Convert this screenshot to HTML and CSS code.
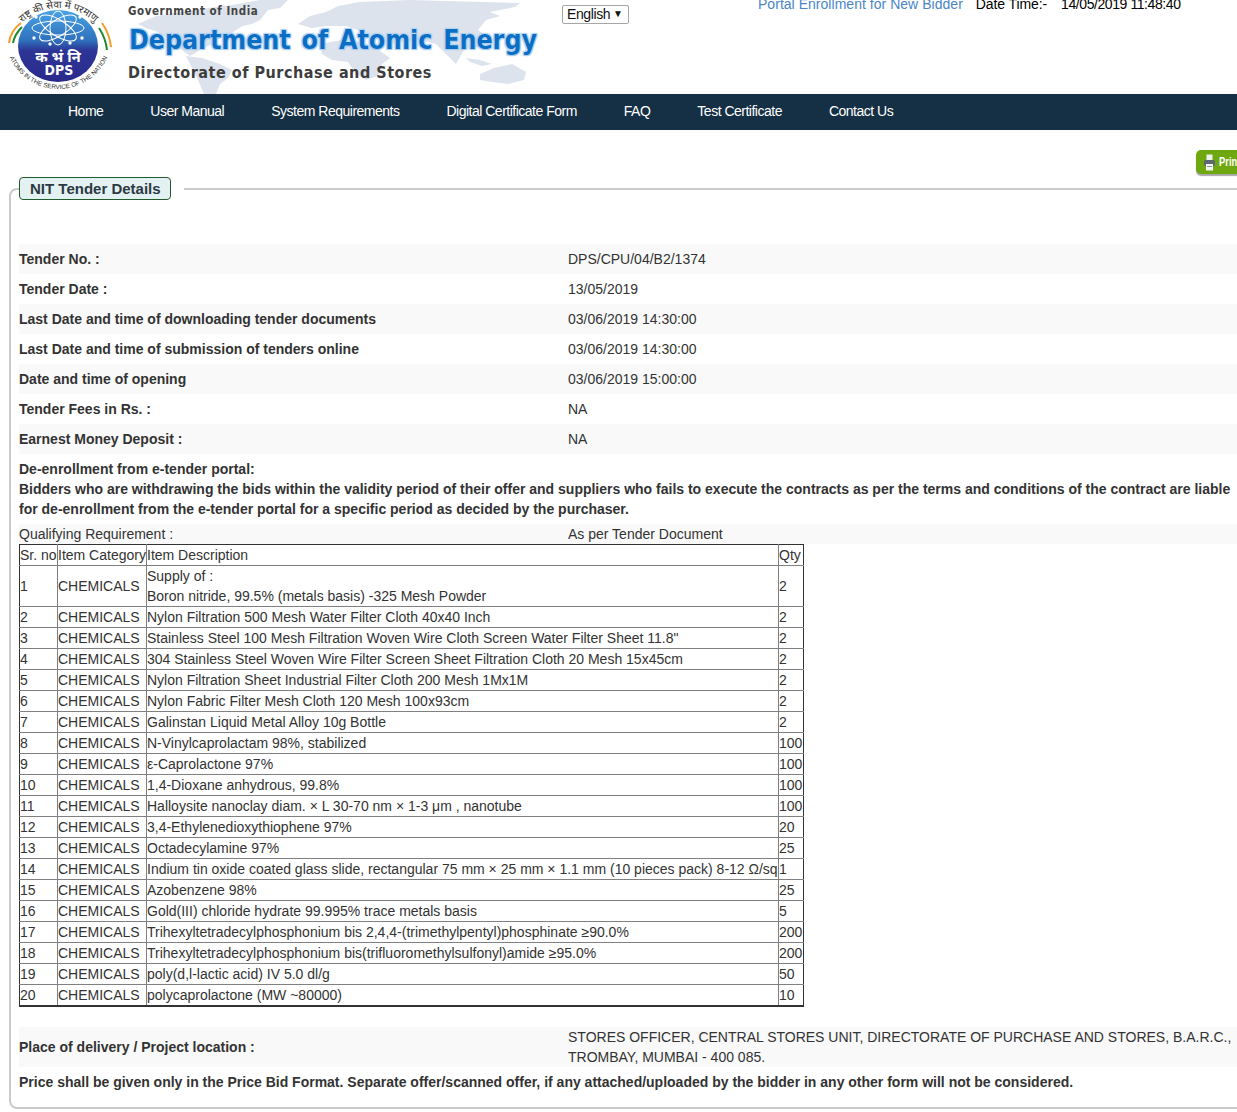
FILE: index.html
```html
<!DOCTYPE html>
<html lang="en">
<head>
<meta charset="utf-8">
<title>NIT Tender Details</title>
<link rel="stylesheet" href="styles.css">
</head>
<body>
<header class="masthead">
  <svg class="worldmap" viewBox="0 0 440 94" width="440" height="94" aria-hidden="true">
    <g fill="#dde3ec">
      <path d="M18 24 36 16 62 12 88 8 112 5 140 0H168L160 8 148 10 140 20 132 24 122 26 112 33 100 38 92 44 80 50 70 56 62 50 50 40 38 32 26 28Z"/>
      <path d="M66 56 82 58 100 64 112 70 108 78 100 84 96 94H84L78 80 72 68Z"/>
      <path d="M178 24 190 16 206 12 218 6 240 2 290 0 400 3 395 7 370 12 380 16 366 20 358 30 372 40 362 46 344 50 336 64 326 54 316 44 300 40 284 42 270 44 252 36 238 30 226 26 206 26 192 28Z"/>
      <path d="M200 44 222 40 242 42 256 48 270 58 262 64 258 76 246 80 236 74 228 62 212 60 202 54Z"/>
      <path d="M360 74 374 68 392 64 406 72 404 80 388 84 372 82 360 80Z"/>
      <path d="M346 58 360 60 372 64 362 66 350 62Z"/>
    </g>
  </svg>
  <div class="brand">
    <svg class="logo" viewBox="0 0 120 94" width="120" height="94" aria-hidden="true">
      <defs>
        <linearGradient id="disc" x1="0" y1="0" x2="0" y2="1">
          <stop offset="0" stop-color="#4aa3e6"/>
          <stop offset=".42" stop-color="#2f72bd"/>
          <stop offset=".56" stop-color="#2d3596"/>
          <stop offset="1" stop-color="#2a2a8c"/>
        </linearGradient>
        <path id="arcTop" d="M20 25A52 52 0 0 1 97 25"/>
        <path id="arcBottom" d="M7 50A53.5 53.5 0 0 0 110 50"/>
      </defs>
      <path d="M9 43C10 35 14 28 21 23" fill="none" stroke="#f59a23" stroke-width="2"/>
      <path d="M13 43C14 37 17 32 22 27" fill="none" stroke="#1d8a2f" stroke-width="2"/>
      <path d="M102 23C107 30 110 38 111 47" fill="none" stroke="#f59a23" stroke-width="2"/>
      <path d="M99 28C103 34 106 41 107 50" fill="none" stroke="#1d8a2f" stroke-width="2"/>
      <ellipse cx="58" cy="46" rx="40" ry="36" fill="url(#disc)"/>
      <g fill="none" stroke="#fff" stroke-width="1">
        <ellipse cx="58" cy="28" rx="8" ry="17"/>
        <ellipse cx="58" cy="28" rx="8" ry="21" transform="rotate(58 58 28)"/>
        <ellipse cx="58" cy="28" rx="8" ry="21" transform="rotate(-58 58 28)"/>
        <ellipse cx="58" cy="28" rx="26" ry="7"/>
      </g>
      <g fill="#fff">
        <circle cx="34" cy="38" r="1.7"/><circle cx="82" cy="38" r="1.7"/><circle cx="50" cy="44" r="1.7"/>
        <circle cx="70" cy="43" r="1.7"/><circle cx="36" cy="17" r="1.7"/><circle cx="80" cy="17" r="1.7"/>
      </g>
      <text class="logo-hindi" x="58" y="62" text-anchor="middle">क भं नि</text>
      <text class="logo-dps" x="59" y="75" text-anchor="middle">DPS</text>
      <text class="logo-arc-top"><textPath href="#arcTop" startOffset="50%" text-anchor="middle">राष्ट्र की सेवा में परमाणु</textPath></text>
      <text class="logo-arc-bottom"><textPath href="#arcBottom" startOffset="50%" text-anchor="middle">ATOMS IN THE SERVICE OF THE NATION</textPath></text>
    </svg>
    <div class="titles">
      <div class="gov">Government of India</div>
      <div class="dept">Department of Atomic Energy</div>
      <div class="dir">Directorate of Purchase and Stores</div>
    </div>
  </div>
  <div class="lang"><span class="lang-name">English</span><span class="caret">▼</span></div>
  <div class="status">
    <a class="enroll" href="#">Portal Enrollment for New Bidder</a>
    <span class="clock-label">Date Time:-</span>
    <span class="clock">14/05/2019 11:48:40</span>
  </div>
</header>

<nav class="mainnav">
  <a href="#">Home</a>
  <a href="#">User Manual</a>
  <a href="#">System Requirements</a>
  <a href="#">Digital Certificate Form</a>
  <a href="#">FAQ</a>
  <a href="#">Test Certificate</a>
  <a href="#">Contact Us</a>
</nav>

<main class="page">
  <div class="toolbar">
    <a class="print" href="#">
      <svg viewBox="0 0 11 17" width="11" height="17" aria-hidden="true">
        <rect x="2.5" y="0.5" width="6" height="5.5" fill="#eef1f2"/>
        <rect x="0" y="6" width="11" height="6" rx="1.5" fill="#5d676e"/>
        <rect x="2" y="10" width="7" height="6.5" fill="#f2f4f5"/>
        <rect x="3" y="12" width="5" height="1" fill="#8a949b"/>
      </svg>
      <span class="print-label">Print</span>
    </a>
  </div>

  <fieldset class="panel">
    <legend><span class="badge">NIT Tender Details</span></legend>
    <div class="details">
      <div class="row"><b>Tender No. :</b><span>DPS/CPU/04/B2/1374</span></div>
      <div class="row"><b>Tender Date :</b><span>13/05/2019</span></div>
      <div class="row"><b>Last Date and time of downloading tender documents</b><span>03/06/2019 14:30:00</span></div>
      <div class="row"><b>Last Date and time of submission of tenders online</b><span>03/06/2019 14:30:00</span></div>
      <div class="row"><b>Date and time of opening</b><span>03/06/2019 15:00:00</span></div>
      <div class="row"><b>Tender Fees in Rs. :</b><span>NA</span></div>
      <div class="row"><b>Earnest Money Deposit :</b><span>NA</span></div>
    </div>
    <p class="notice">De-enrollment from e-tender portal:<br>Bidders who are withdrawing the bids within the validity period of their offer and suppliers who fails to execute the contracts as per the terms and conditions of the contract are liable<br>for de-enrollment from the e-tender portal for a specific period as decided by the purchaser.</p>
    <div class="qualify"><span>Qualifying Requirement :</span><span>As per Tender Document</span></div>
    <table class="items">
      <thead>
        <tr><th>Sr. no</th><th>Item Category</th><th>Item Description</th><th>Qty</th></tr>
      </thead>
      <tbody>
        <tr><td>1</td><td>CHEMICALS</td><td>Supply of :<br>Boron nitride, 99.5% (metals basis) -325 Mesh Powder</td><td>2</td></tr>
        <tr><td>2</td><td>CHEMICALS</td><td>Nylon Filtration 500 Mesh Water Filter Cloth 40x40 Inch</td><td>2</td></tr>
        <tr><td>3</td><td>CHEMICALS</td><td>Stainless Steel 100 Mesh Filtration Woven Wire Cloth Screen Water Filter Sheet 11.8"</td><td>2</td></tr>
        <tr><td>4</td><td>CHEMICALS</td><td>304 Stainless Steel Woven Wire Filter Screen Sheet Filtration Cloth 20 Mesh 15x45cm</td><td>2</td></tr>
        <tr><td>5</td><td>CHEMICALS</td><td>Nylon Filtration Sheet Industrial Filter Cloth 200 Mesh 1Mx1M</td><td>2</td></tr>
        <tr><td>6</td><td>CHEMICALS</td><td>Nylon Fabric Filter Mesh Cloth 120 Mesh 100x93cm</td><td>2</td></tr>
        <tr><td>7</td><td>CHEMICALS</td><td>Galinstan Liquid Metal Alloy 10g Bottle</td><td>2</td></tr>
        <tr><td>8</td><td>CHEMICALS</td><td>N-Vinylcaprolactam 98%, stabilized</td><td>100</td></tr>
        <tr><td>9</td><td>CHEMICALS</td><td>ε-Caprolactone 97%</td><td>100</td></tr>
        <tr><td>10</td><td>CHEMICALS</td><td>1,4-Dioxane anhydrous, 99.8%</td><td>100</td></tr>
        <tr><td>11</td><td>CHEMICALS</td><td>Halloysite nanoclay diam. × L 30-70 nm × 1-3 μm , nanotube</td><td>100</td></tr>
        <tr><td>12</td><td>CHEMICALS</td><td>3,4-Ethylenedioxythiophene 97%</td><td>20</td></tr>
        <tr><td>13</td><td>CHEMICALS</td><td>Octadecylamine 97%</td><td>25</td></tr>
        <tr><td>14</td><td>CHEMICALS</td><td>Indium tin oxide coated glass slide, rectangular 75 mm × 25 mm × 1.1 mm (10 pieces pack) 8-12 Ω/sq</td><td>1</td></tr>
        <tr><td>15</td><td>CHEMICALS</td><td>Azobenzene 98%</td><td>25</td></tr>
        <tr><td>16</td><td>CHEMICALS</td><td>Gold(III) chloride hydrate 99.995% trace metals basis</td><td>5</td></tr>
        <tr><td>17</td><td>CHEMICALS</td><td>Trihexyltetradecylphosphonium bis 2,4,4-(trimethylpentyl)phosphinate ≥90.0%</td><td>200</td></tr>
        <tr><td>18</td><td>CHEMICALS</td><td>Trihexyltetradecylphosphonium bis(trifluoromethylsulfonyl)amide ≥95.0%</td><td>200</td></tr>
        <tr><td>19</td><td>CHEMICALS</td><td>poly(d,l-lactic acid) IV 5.0 dl/g</td><td>50</td></tr>
        <tr><td>20</td><td>CHEMICALS</td><td>polycaprolactone (MW ~80000)</td><td>10</td></tr>
      </tbody>
    </table>
    <div class="delivery"><b>Place of delivery / Project location :</b><span>STORES OFFICER, CENTRAL STORES UNIT, DIRECTORATE OF PURCHASE AND STORES, B.A.R.C.,<br>TROMBAY, MUMBAI - 400 085.</span></div>
    <p class="pricing">Price shall be given only in the Price Bid Format. Separate offer/scanned offer, if any attached/uploaded by the bidder in any other form will not be considered.</p>
  </fieldset>
</main>
</body>
</html>
```
FILE: styles.css
```css
* { box-sizing: border-box; }
html, body { margin: 0; padding: 0; overflow-x: hidden; }
body {
  width: 1237px;
  height: 1112px;
  overflow: hidden;
  background: #fff;
  color: #333;
  font: 14px/20px "Liberation Sans", Arial, sans-serif;
}
a { text-decoration: none; color: inherit; }

.masthead {
  position: relative;
  display: flex;
  height: 94px;
  overflow: hidden;
}
.worldmap { position: absolute; left: 120px; top: 0; }
.brand { position: relative; display: flex; width: 562px; }
.logo { flex: none; width: 120px; }
.logo-hindi { font: 700 15px "Noto Sans", "DejaVu Sans", sans-serif; fill: #fff; }
.logo-dps { font: 700 14px "DejaVu Sans", sans-serif; font-stretch: condensed; fill: #fff; }
.logo-arc-top { font: 10px "Noto Sans", "DejaVu Sans", sans-serif; fill: #333; }
.logo-arc-bottom { font: 6.3px "Liberation Sans", sans-serif; fill: #333; }

.titles {
  padding: 3px 0 0 8px;
  font-family: "DejaVu Sans", sans-serif;
  font-stretch: condensed;
  font-weight: 700;
}
.gov { font-size: 11.5px; line-height: 16px; color: #444; letter-spacing: .55px; }
.dept {
  margin: 3px 0 0 1px;
  font-size: 26.5px;
  line-height: 36px;
  white-space: nowrap;
  color: #0a6fc4;
  word-spacing: 2.5px;
  text-shadow: 0 0 2px #fff, 1px 1px 1px #8ab8e8, -1px -1px 1px #9cc6ee, 1px -1px 1px #9cc6ee, -1px 1px 1px #9cc6ee;
}
.dir { margin-top: 3px; font-size: 16px; line-height: 24px; white-space: nowrap; color: #3d3d3d; letter-spacing: .52px; }

.lang {
  position: relative;
  display: flex;
  align-items: center;
  justify-content: space-between;
  align-self: flex-start;
  width: 67px;
  height: 19px;
  margin-top: 5px;
  padding: 0 5px 2px 4px;
  border: 1px solid #a6a6a6;
  border-radius: 2px;
  background: #fff;
  color: #111;
}
.lang-name { letter-spacing: -.4px; }
.caret { font-size: 10px; line-height: 1; }
.status {
  position: relative;
  display: flex;
  align-self: flex-start;
  margin: -6px 0 0 129px;
  white-space: nowrap;
  color: #000;
}
.enroll { color: #4a86c8; letter-spacing: .03px; }
.clock-label { margin-left: 13px; letter-spacing: -.1px; }
.clock { margin-left: 14px; letter-spacing: -.42px; }

.mainnav {
  display: flex;
  gap: 47px;
  height: 36px;
  padding: 0 0 2px 68px;
  align-items: center;
  background: #152f44;
  color: #fff;
  letter-spacing: -.5px;
}

.page { width: 1237px; overflow: hidden; }
.toolbar { height: 47px; padding: 20px 0 0 1196px; }
.print {
  display: flex;
  align-items: center;
  gap: 4px;
  width: 60px;
  height: 24px;
  padding-left: 8px;
  border-radius: 5px;
  background: #6fa80e;
  box-shadow: 0 2px 1px #a8a8a8;
  color: #fff;
  font: 700 13px/24px "Liberation Sans", sans-serif;
  white-space: nowrap;
}
.print-label { display: block; transform: scaleX(.72); transform-origin: left center; }

.panel {
  width: 1300px;
  height: 932px;
  margin: 0 0 0 9px;
  padding: 44px 0 0 8px;
  border: 2px solid #cacaca;
  border-radius: 8px;
}
.panel legend { padding: 0 13px 0 0; }
.badge {
  display: block;
  height: 23px;
  padding: 0 9px 0 10px;
  border: 1px solid #1f5c2a;
  border-radius: 4px;
  background: #e4f1f3;
  color: #2b3a42;
  font-size: 15px;
  font-weight: 700;
  line-height: 21px;
}

.details { width: 100%; }
.row {
  display: grid;
  grid-template-columns: 549px 1fr;
  padding: 5px 0;
}
.row:nth-child(odd) { background: #f9f9f9; }

.notice {
  margin: 0;
  padding: 5px 0;
  font-weight: 700;
  white-space: nowrap;
}
.qualify {
  display: grid;
  grid-template-columns: 549px 1fr;
  background: #f9f9f9;
}

.items {
  width: 785px;
  border-collapse: collapse;
}
.items th, .items td {
  padding: 0;
  border: 1px solid #808080;
  font-weight: 400;
  text-align: left;
  vertical-align: middle;
  white-space: nowrap;
}
.items th { border-top-color: #333; }
.items tr > :first-child { border-left-color: #333; }
.items tr > :last-child { border-right-color: #333; }
.items tbody tr:last-child td { border-bottom: 2px solid #333; }
.items tr > :nth-child(1) { width: 38px; }
.items tr > :nth-child(2) { width: 89px; }
.items tr > :nth-child(4) { width: 25px; }

.delivery {
  display: grid;
  grid-template-columns: 549px 1fr;
  align-items: center;
  margin-top: 20px;
  background: #f9f9f9;
}
.pricing {
  margin: 5px 0 0;
  padding: 0;
  font-weight: 700;
  white-space: nowrap;
}
```
